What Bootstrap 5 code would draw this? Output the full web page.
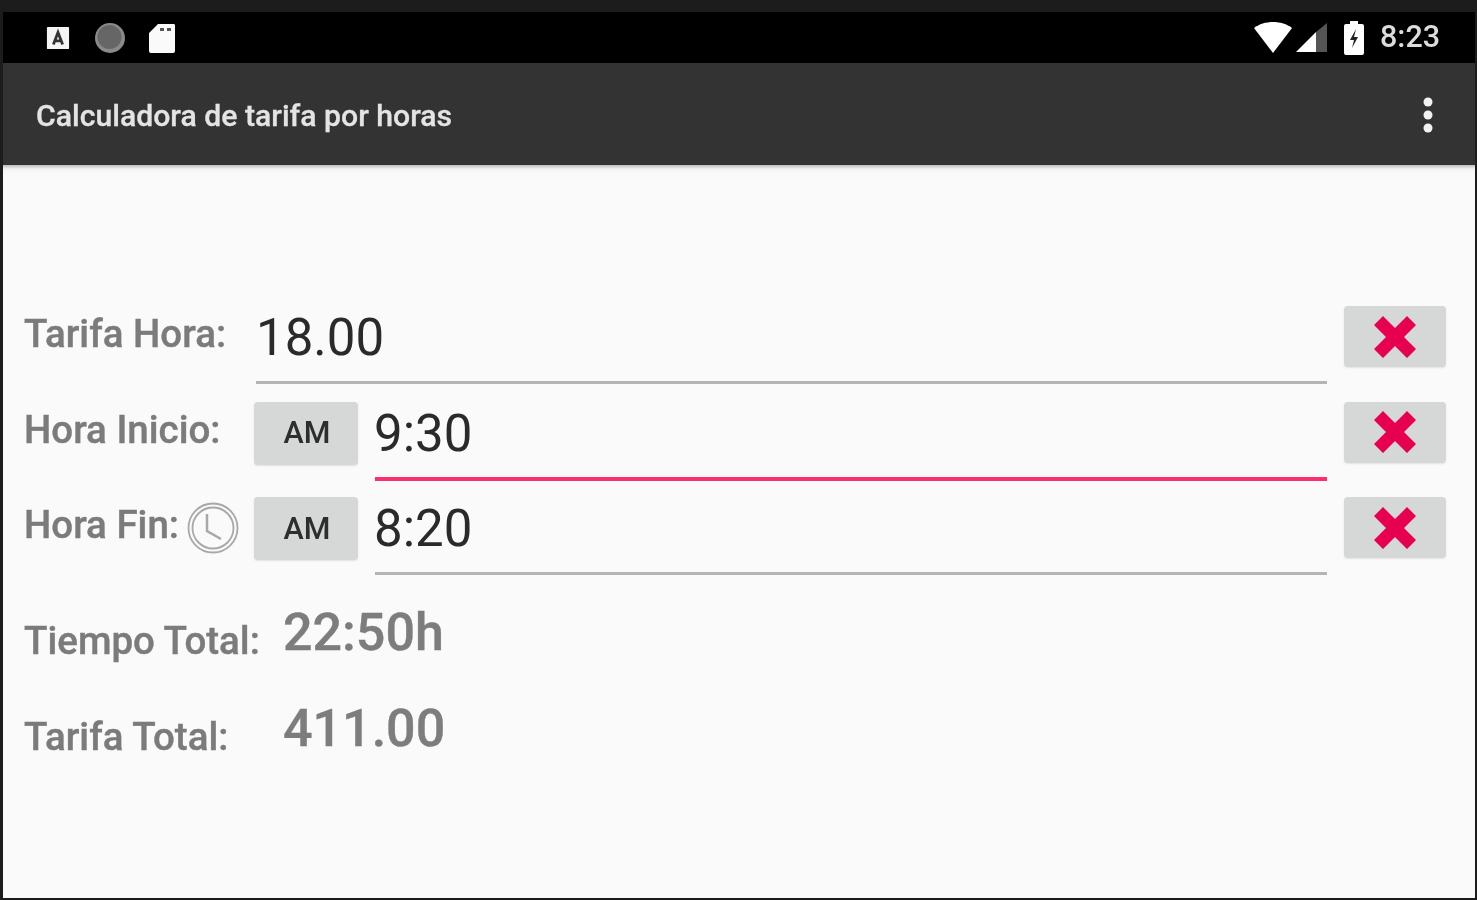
<!DOCTYPE html>
<html lang="es">
<head>
<meta charset="utf-8">
<title>Calculadora de tarifa por horas</title>
<link href="https://cdn.jsdelivr.net/npm/bootstrap@5.3.0/dist/css/bootstrap.min.css" rel="stylesheet">
<style>
html,body{margin:0;height:900px;overflow:hidden;background:#2b2b2b}
body{font-family:Roboto,"Liberation Sans",sans-serif}
.device{height:900px;padding:12px 2px 2px 3px;background:#1c1c1c;display:flex;flex-direction:column}
.status-strip{height:51px;background:#000;padding:0 35px 0 43px;color:#dcdcdc}
.status-strip svg{display:block;filter:blur(.7px)}
.gap-circle{margin-left:24px}
.gap-sd{margin-left:22px}
.clock-txt{font-size:30.500px;line-height:1;font-weight:500;width:60px;filter:blur(.7px);margin-left:16px}
.app-bar{height:102px;background:#333;color:#e4e4e4;padding:0 41px 0 33px}
.app-title{font-size:30.200px;line-height:1;font-weight:500;filter:blur(.7px);margin:5px 0 0;-webkit-text-stroke:.3px #e4e4e4}
.menu-dots{filter:blur(.6px);margin-top:2px}
.screen{flex:1;background:#fafafa;position:relative;padding:126px 29px 0 21px}
.screen::before{content:"";position:absolute;left:0;right:0;top:0;height:8px;background:linear-gradient(#bdbdbd,#f2f2f2 50%,#fafafa)}
.form-line{height:95.500px;display:flex;align-items:flex-start;padding-top:15px}
.lbl-group{width:230px;flex:none;display:flex;align-items:flex-start}
.lbl{font-size:38.500px;line-height:56px;font-weight:500;color:#7b7b7b;filter:blur(.7px);white-space:nowrap;-webkit-text-stroke:.4px #7b7b7b}
.clock-ico{width:52px;height:52px;margin:5px 0 0 8px;flex:none;filter:blur(.5px)}
.am-btn{width:104px;height:63px;flex:none;margin-right:17px;background:#d6d7d7;border:0;border-radius:4px;font-size:30.500px;font-weight:500;color:#2e2e2e;padding:0 0 0 2px;box-shadow:0 1px 2px rgba(0,0,0,.1);filter:blur(.5px)}
.am-btn:hover{background:#d6d7d7;color:#2e2e2e}
.value-wrap{flex:1;height:78px;margin-left:2px;border-bottom:3px solid #b4b4b4;font-size:51px;line-height:64px;color:#2a2a2a}
.value-wrap span{filter:blur(.5px);display:inline-block}
.value-wrap.on{border-bottom:4px solid #fb2e6e;height:79px}
.am-btn + .value-wrap{margin-left:0}
.am-btn + .value-wrap span{margin-left:-1px}
.x-btn{width:102px;height:61px;flex:none;margin-left:17px;background:#d6d7d7;border:0;border-radius:4px;padding:0;display:flex;align-items:center;justify-content:center;box-shadow:0 1px 2px rgba(0,0,0,.1)}
.x-btn:hover{background:#d6d7d7}
.x-btn svg{filter:blur(.6px)}
.sum-line{height:95px;display:flex;align-items:flex-start}
.sum-wrap{height:118px;padding-top:22px}
.sum-lbl{width:259px;flex:none;font-size:38.500px;line-height:56px;font-weight:500;color:#7b7b7b;padding-top:13px;filter:blur(.7px);-webkit-text-stroke:.4px #7b7b7b}
.sum-val{font-size:52px;line-height:64px;margin-top:1px;font-weight:500;color:#7d7d7d;filter:blur(.7px);-webkit-text-stroke:.4px #7d7d7d}
</style>
</head>
<body>
<div class="device">
  <div class="status-strip d-flex align-items-center">
    <svg width="24" height="28" viewBox="0 0 26 28"><rect x="1" y="2" width="24" height="24" rx="1" fill="#f4f4f4"/><path d="M8 21 13 8l5 13M10 17h6" fill="none" stroke="#333" stroke-width="3"/></svg>
    <svg class="gap-circle" width="32" height="32" viewBox="0 0 32 32"><circle cx="16" cy="16" r="15" fill="#8a8a8a"/><circle cx="15.500" cy="15" r="12" fill="#666"/></svg>
    <svg class="gap-sd" width="28" height="32" viewBox="0 0 28 32"><path d="M10 2h16a1.500 1.500 0 0 1 1 1.500V29a2 2 0 0 1-2 2H3a2 2 0 0 1-2-2V11z" fill="#fafafa"/><rect x="12" y="6" width="4" height="3" fill="#555"/><rect x="19" y="6" width="4" height="3" fill="#555"/></svg>
    <div class="ms-auto d-flex align-items-center">
      <svg width="38" height="32" viewBox="0 0 38 32"><path d="M0 6C5 2 12 0 19 0s14 2 19 6L19 31z" fill="#fff"/></svg>
      <svg class="ms-1" width="32" height="32" viewBox="0 0 32 32"><path d="M0 30 20 10v20z" fill="#fff"/><path d="M20 10 31 1v29H20z" fill="#555"/></svg>
      <svg class="ms-3" width="20" height="34" viewBox="0 0 20 34"><path d="M6 0h8v3h4a2 2 0 0 1 2 2v27a2 2 0 0 1-2 2H2a2 2 0 0 1-2-2V5a2 2 0 0 1 2-2h4z" fill="#fff"/><path d="M12 8 6 19h4l-2 8 6-11h-4z" fill="#222"/></svg>
      <span class="clock-txt">8:23</span>
    </div>
  </div>
  <div class="app-bar d-flex align-items-center justify-content-between">
    <h1 class="app-title">Calculadora de tarifa por horas</h1>
    <svg class="menu-dots" width="12" height="38" viewBox="0 0 12 38" fill="#f2f2f2"><circle cx="6" cy="6" r="4.500"/><circle cx="6" cy="19" r="4.500"/><circle cx="6" cy="32" r="4.500"/></svg>
  </div>
  <main class="screen">
    <div class="form-line">
      <div class="lbl-group"><div class="lbl">Tarifa Hora:</div></div>
      <div class="value-wrap"><span>18.00</span></div>
      <button type="button" class="btn x-btn" aria-label="Borrar"><svg width="44" height="44" viewBox="0 0 44 44"><path d="M1 10 10 1 22 13 34 1 43 10 31 22 43 34 34 43 22 31 10 43 1 34 13 22Z" fill="#e6004f"/></svg></button>
    </div>
    <div class="form-line">
      <div class="lbl-group"><div class="lbl">Hora Inicio:</div></div>
      <button type="button" class="btn am-btn">AM</button>
      <div class="value-wrap on"><span>9:30</span></div>
      <button type="button" class="btn x-btn" aria-label="Borrar"><svg width="44" height="44" viewBox="0 0 44 44"><path d="M1 10 10 1 22 13 34 1 43 10 31 22 43 34 34 43 22 31 10 43 1 34 13 22Z" fill="#e6004f"/></svg></button>
    </div>
    <div class="form-line">
      <div class="lbl-group">
        <div class="lbl">Hora Fin:</div>
        <svg class="clock-ico" viewBox="0 0 52 52" fill="none" stroke="#a8a8a8" stroke-width="1.800"><circle cx="26" cy="26" r="24.500"/><circle cx="26" cy="26" r="20.500"/><path d="M20 12v17l14 8" stroke-width="2.500"/></svg>
      </div>
      <button type="button" class="btn am-btn">AM</button>
      <div class="value-wrap"><span>8:20</span></div>
      <button type="button" class="btn x-btn" aria-label="Borrar"><svg width="44" height="44" viewBox="0 0 44 44"><path d="M1 10 10 1 22 13 34 1 43 10 31 22 43 34 34 43 22 31 10 43 1 34 13 22Z" fill="#e6004f"/></svg></button>
    </div>
    <div class="sum-line sum-wrap">
      <div class="sum-lbl">Tiempo Total:</div>
      <div class="sum-val">22:50h</div>
    </div>
    <div class="sum-line">
      <div class="sum-lbl">Tarifa Total:</div>
      <div class="sum-val">411.00</div>
    </div>
  </main>
</div>
<script src="https://cdn.jsdelivr.net/npm/bootstrap@5.3.0/dist/js/bootstrap.bundle.min.js"></script>
</body>
</html>
